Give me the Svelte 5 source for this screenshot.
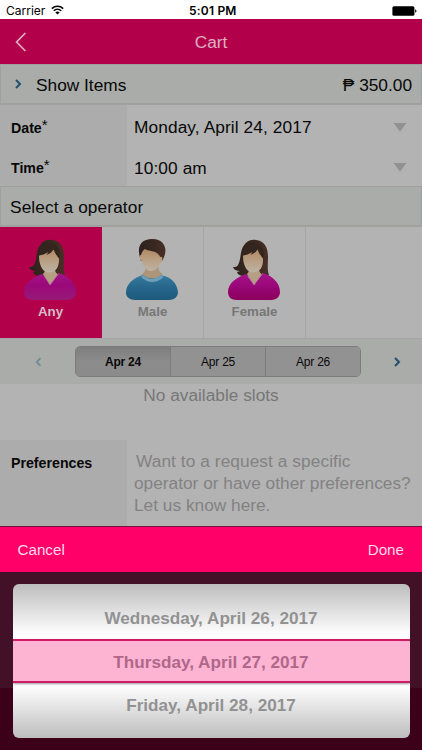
<script lang="ts">
  let operator = 'Any';
  let day = 'Apr 24';

  const operators = [
    { name: 'Any', female: true },
    { name: 'Male', female: false },
    { name: 'Female', female: true }
  ];

  const days = ['Apr 24', 'Apr 25', 'Apr 26'];

  const fields = [
    { label: 'Date', value: 'Monday, April 24, 2017' },
    { label: 'Time', value: '10:00 am' }
  ];

  const wheel = ['Wednesday, April 26, 2017', 'Thursday, April 27, 2017', 'Friday, April 28, 2017'];
</script>

<div class="screen">
  <div class="status">
    <span class="carrier">Carrier</span>
    <svg class="wifi" width="13" height="10" viewBox="0 0 13 10">
      <path d="M.8 3.6a8.3 8.3 0 0 1 11.4 0M2.8 5.7a5.4 5.4 0 0 1 7.4 0" fill="none" stroke="#000" stroke-width="1.5" />
      <path d="M4.4 7.4a3.1 3.1 0 0 1 4.2 0L6.5 9.5z" />
    </svg>
    <span class="clock">5:01 PM</span>
    <svg class="battery" width="25" height="10" viewBox="0 0 25 10">
      <rect x=".4" y=".2" width="22" height="9.6" rx="1.5" />
      <path d="M23.2 3.3q1.3.4 1.3 1.7t-1.3 1.7z" />
    </svg>
  </div>

  <header>
    <svg class="back" width="12" height="20" viewBox="0 0 12 20">
      <path d="M10.4 1 1.6 10l8.8 9" fill="none" stroke="#ddb0c2" stroke-width="1.7" />
    </svg>
    <span>Cart</span>
  </header>

  <div class="bar items">
    <svg width="7" height="10" viewBox="0 0 7 10">
      <path d="M1 1l4 4-4 4" fill="none" stroke="#24506f" stroke-width="2" />
    </svg>
    <span class="show">Show Items</span>
    <span class="price">₱ 350.00</span>
  </div>

  <div class="fields">
    {#each fields as field}
      <div class="field">
        <div class="label">{field.label}<sup>*</sup></div>
        <div class="value">{field.value}</div>
        <svg width="14" height="9" viewBox="0 0 14 9"><path d="M.5 0h13L7 8.7z" fill="#919191" /></svg>
      </div>
    {/each}
  </div>

  <div class="bar select">Select a operator</div>

  <div class="operators">
    {#each operators as { name, female }, i}
      <button class="card" class:active={operator === name} on:click={() => (operator = name)}>
        <svg width="54" height="63" viewBox="0 0 54 63">
          <defs>
            <linearGradient id="face{i}" x1="0" y1="0" x2="0" y2="1">
              <stop offset="0" stop-color="#b08a66" />
              <stop offset=".45" stop-color="#b99d80" />
              <stop offset="1" stop-color="#bdb3a5" />
            </linearGradient>
            <linearGradient id="shirt{i}" x1="0" y1="0" x2="0" y2="1">
              <stop offset="0" stop-color={female ? '#a51587' : '#367ba0'} />
              <stop offset=".45" stop-color={female ? '#9a087a' : '#28688c'} />
              <stop offset="1" stop-color={female ? (name === 'Any' ? '#971a78' : '#8b005b') : '#1d5a7c'} />
            </linearGradient>
            <linearGradient id="hair{i}" x1="0" y1="0" x2="1" y2="0">
              <stop offset="0" stop-color="#2d211e" />
              <stop offset=".6" stop-color="#39281f" />
              <stop offset="1" stop-color="#4a3027" />
            </linearGradient>
          </defs>
          {#if female}
            <path d="M15 11C18 4 23 1 29 2c9 1 12 8 12 17 0 7-1 12 1 18l-9 2-11-1c-5 1-11 0-12-4l3-1c-3 0-6-1-7-4 2 0 4 0 5-2 3-5 2-11 4-16z" fill="url(#hair{i})" />
            <path d="M20 36q2-2 2-5h10q0 4 4 6l-9 10z" fill="#b5a083" />
            <path d="M16 18C16 13 20 11 26 11c7 0 10 4 10 11 0 8-4 12.500-10 12.500S16 28 16 18z" fill="url(#face{i})" />
            <path d="M15 18C15 10 21 5 27 5c7 0 11 6 9.500 16-3-3-5-7-6-10-1 3-4 5-7 6l2-3c-3 2-7 3-10.500 4z" fill="#35251f" />
            <path d="m19 36 8 11 9-12c9 3 17 9 17 19 0 5-4 8-9 8H10c-6 0-9-3-9-8 0-10 10-15 18-18z" fill="url(#shirt{i})" />
            <path d="m20 36 7 11 8.5-11.5" fill="none" stroke="#b56fa4" stroke-width=".8" />
          {:else}
            <path d="M16 23C12 12 13 2 26 1c11-1 16 7 14 15q-1 4-3 7z" fill="url(#hair{i})" />
            <path d="M21 27h12q0 7 5 9l-11 7-11-6q5-3 5-10z" fill="#ad957c" />
            <path d="M17 23c-3-2-3-6-1-6 1-3 2-5 4-6 5 3 9 1 13 5 1 1 2 2 2 3 2-1 3 1 2 3 0 2-1 3-2 3-2 5-5 8-9 8s-8-4-9-10z" fill="url(#face{i})" />
            <path d="M18 37c-10 3-17 9-17 18 0 4 4 7 9 7h34c6 0 9-4 9-8-1-10-8-15-17-17q-8 7-18 0z" fill="url(#shirt{i})" />
            <path d="M17 38q10 9 20.5 0" fill="none" stroke="#709fb8" stroke-width="3" />
          {/if}
        </svg>
        <span>{name}</span>
      </button>
    {/each}
  </div>

  <div class="days">
    <svg class="prev" width="7" height="10" viewBox="0 0 7 10">
      <path d="M5.5 1.2 1.7 5l3.8 3.8" fill="none" stroke="#6f8a98" stroke-width="1.8" />
    </svg>
    <div class="segments">
      {#each days as d}
        <button class:picked={d === day} on:click={() => (day = d)}>{d}</button>
      {/each}
    </div>
    <svg class="next" width="7" height="10" viewBox="0 0 7 10">
      <path d="M1 1l4 4-4 4" fill="none" stroke="#24506f" stroke-width="2" />
    </svg>
  </div>

  <div class="empty">No available slots</div>

  <div class="prefs">
    <div class="label">Preferences</div>
    <div class="hint"><span>Want to a request a specific</span><br />operator or have other preferences?<br />Let us know here.</div>
  </div>

  <div class="toolbar">
    <span class="cancel">Cancel</span>
    <span class="done">Done</span>
  </div>

  <div class="sheet">
    <div class="wheel">
      {#each wheel as date, i}
        <div class="date" class:current={i === 1}>{date}</div>
      {/each}
    </div>
  </div>
</div>

<style>
  :global(body) {
    margin: 0;
    background: #b3b3b3;
  }

  .screen {
    width: 422px;
    height: 750px;
    overflow: hidden;
    display: flex;
    flex-direction: column;
    background: #b3b3b3;
    color: #080808;
    font-family: "Liberation Sans", Arial, sans-serif;
    font-size: 17.3px;
  }

  .screen > div,
  header {
    box-sizing: border-box;
    flex-shrink: 0;
  }

  button {
    font-family: inherit;
    border: 0;
    padding: 0;
    margin: 0;
    box-sizing: border-box;
  }

  .status {
    height: 19px;
    background: #fff;
    color: #000;
    display: grid;
    grid-template-columns: 45px 138px 50px 1fr;
    align-items: center;
    padding: 2px 6px 0 6px;
    font-family: Inter, sans-serif;
    font-size: 12px;
  }

  .wifi {
    margin-top: -1px;
  }

  .clock {
    font-weight: 600;
    letter-spacing: 0.2px;
    white-space: nowrap;
  }

  .battery {
    justify-self: end;
    margin-right: -1px;
  }

  header {
    height: 45px;
    background: #b3004a;
    color: #ddb0c2;
    display: grid;
    grid-template-columns: 40px 1fr 40px;
    align-items: center;
    text-align: center;
  }

  header span {
    padding-top: 1px;
  }

  .back {
    margin-left: 15px;
  }

  .bar {
    height: 41px;
    background: #a9aca8;
    border: 1px solid #a0a19f;
    border-width: 1px 1px 2px;
    display: flex;
    align-items: center;
    box-sizing: border-box;
  }

  .items {
    padding: 2px 9px 0 14px;
  }

  .items svg {
    margin-top: -2px;
  }

  .show {
    margin-left: 14px;
  }

  .price {
    margin-left: auto;
  }

  .fields {
    height: 81px;
    background: linear-gradient(90deg, #acacac 127px, #b3b3b3 127px);
  }

  .field {
    height: 40.5px;
    display: flex;
    align-items: center;
    padding-right: 15px;
    box-sizing: border-box;
    padding-top: 5px;
  }

  .field svg {
    margin-top: -1px;
  }

  .label {
    width: 123px;
    padding-left: 11px;
    font-size: 14.2px;
    font-weight: bold;
  }

  .label sup {
    font-size: 15px;
    line-height: 0;
    vertical-align: 3px;
    font-weight: normal;
  }

  .value {
    flex: 1;
    letter-spacing: 0.1px;
  }

  .select {
    padding-left: 9px;
    padding-top: 3px;
    letter-spacing: 0.1px;
  }

  .operators {
    height: 112px;
    display: flex;
    border-bottom: 1px solid #a5a5a5;
  }

  .card {
    width: 102px;
    height: 111px;
    background: #b3b3b3;
    border-right: 1px solid #a5a5a5;
    color: #777;
    font-size: 13.3px;
    font-weight: bold;
    display: flex;
    flex-direction: column;
    align-items: center;
    padding-top: 11px;
  }

  .card.active {
    background: #b3004a;
    border-color: #b3004a;
    color: #d6bcc8;
  }

  .card svg {
    margin-right: 1px;
  }

  .card span {
    margin-top: 3px;
  }

  .days {
    height: 45px;
    background: #a9aca8;
    display: flex;
    align-items: center;
  }

  .prev {
    margin-left: 35px;
    width: 7px;
  }

  .next {
    margin-left: 33px;
  }

  .segments {
    width: 286px;
    height: 31px;
    margin-left: 33px;
    display: flex;
    border: 1px solid #7d7b7c;
    border-radius: 5px;
    box-sizing: border-box;
    overflow: hidden;
  }

  .segments button {
    flex: 1;
    background: #929292;
    color: #080808;
    font-size: 12px;
    letter-spacing: -0.2px;
    border-right: 1px solid #7d7b7c;
  }

  .segments button:last-child {
    border-right: 0;
  }

  .segments .picked {
    background: linear-gradient(#7e7e7e, #8c8c8c 50%, #8b8b8b);
    font-weight: bold;
  }

  .empty {
    height: 56px;
    padding-top: 1px;
    text-align: center;
    color: #777;
  }

  .prefs {
    height: 86px;
    display: flex;
    background: linear-gradient(90deg, #acacac 127px, #b3b3b3 127px);
  }

  .prefs .label {
    padding-top: 15px;
  }

  .hint {
    color: #828282;
    line-height: 22.3px;
    padding-top: 9.5px;
    white-space: nowrap;
  }

  .hint span {
    margin-left: 2px;
    letter-spacing: 0.07px;
  }

  .toolbar {
    height: 46px;
    background: #ff0068;
    border-top: 1px solid #75103b;
    color: #ffd9e8;
    display: flex;
    justify-content: space-between;
    align-items: center;
    padding: 0 18px 1px 17.5px;
    font-size: 15.2px;
  }

  .sheet {
    height: 178px;
    padding: 12px 12.5px 12px;
    background: linear-gradient(#431127 116px, #3d0019 116px);
  }

  .wheel {
    height: 154px;
    border-radius: 6px;
    overflow: hidden;
    background: linear-gradient(#bdbdbd, #fff 33%, #fff 66%, #bdbdbd);
    display: grid;
    grid-template-rows: 55px 44px 55px;
  }

  .date {
    display: flex;
    align-items: center;
    justify-content: center;
    color: #929292;
    font-size: 17.15px;
    font-weight: bold;
    padding-top: 14px;
    box-sizing: border-box;
  }

  .date.current {
    color: #b0678a;
    background: #fdb4d2;
    border: 2px solid #d01c65;
    border-width: 2px 0;
    padding-top: 2px;
    box-shadow: 0 1px 2px #999;
  }

  .date:last-child {
    padding: 0 0 11px;
  }
</style>
